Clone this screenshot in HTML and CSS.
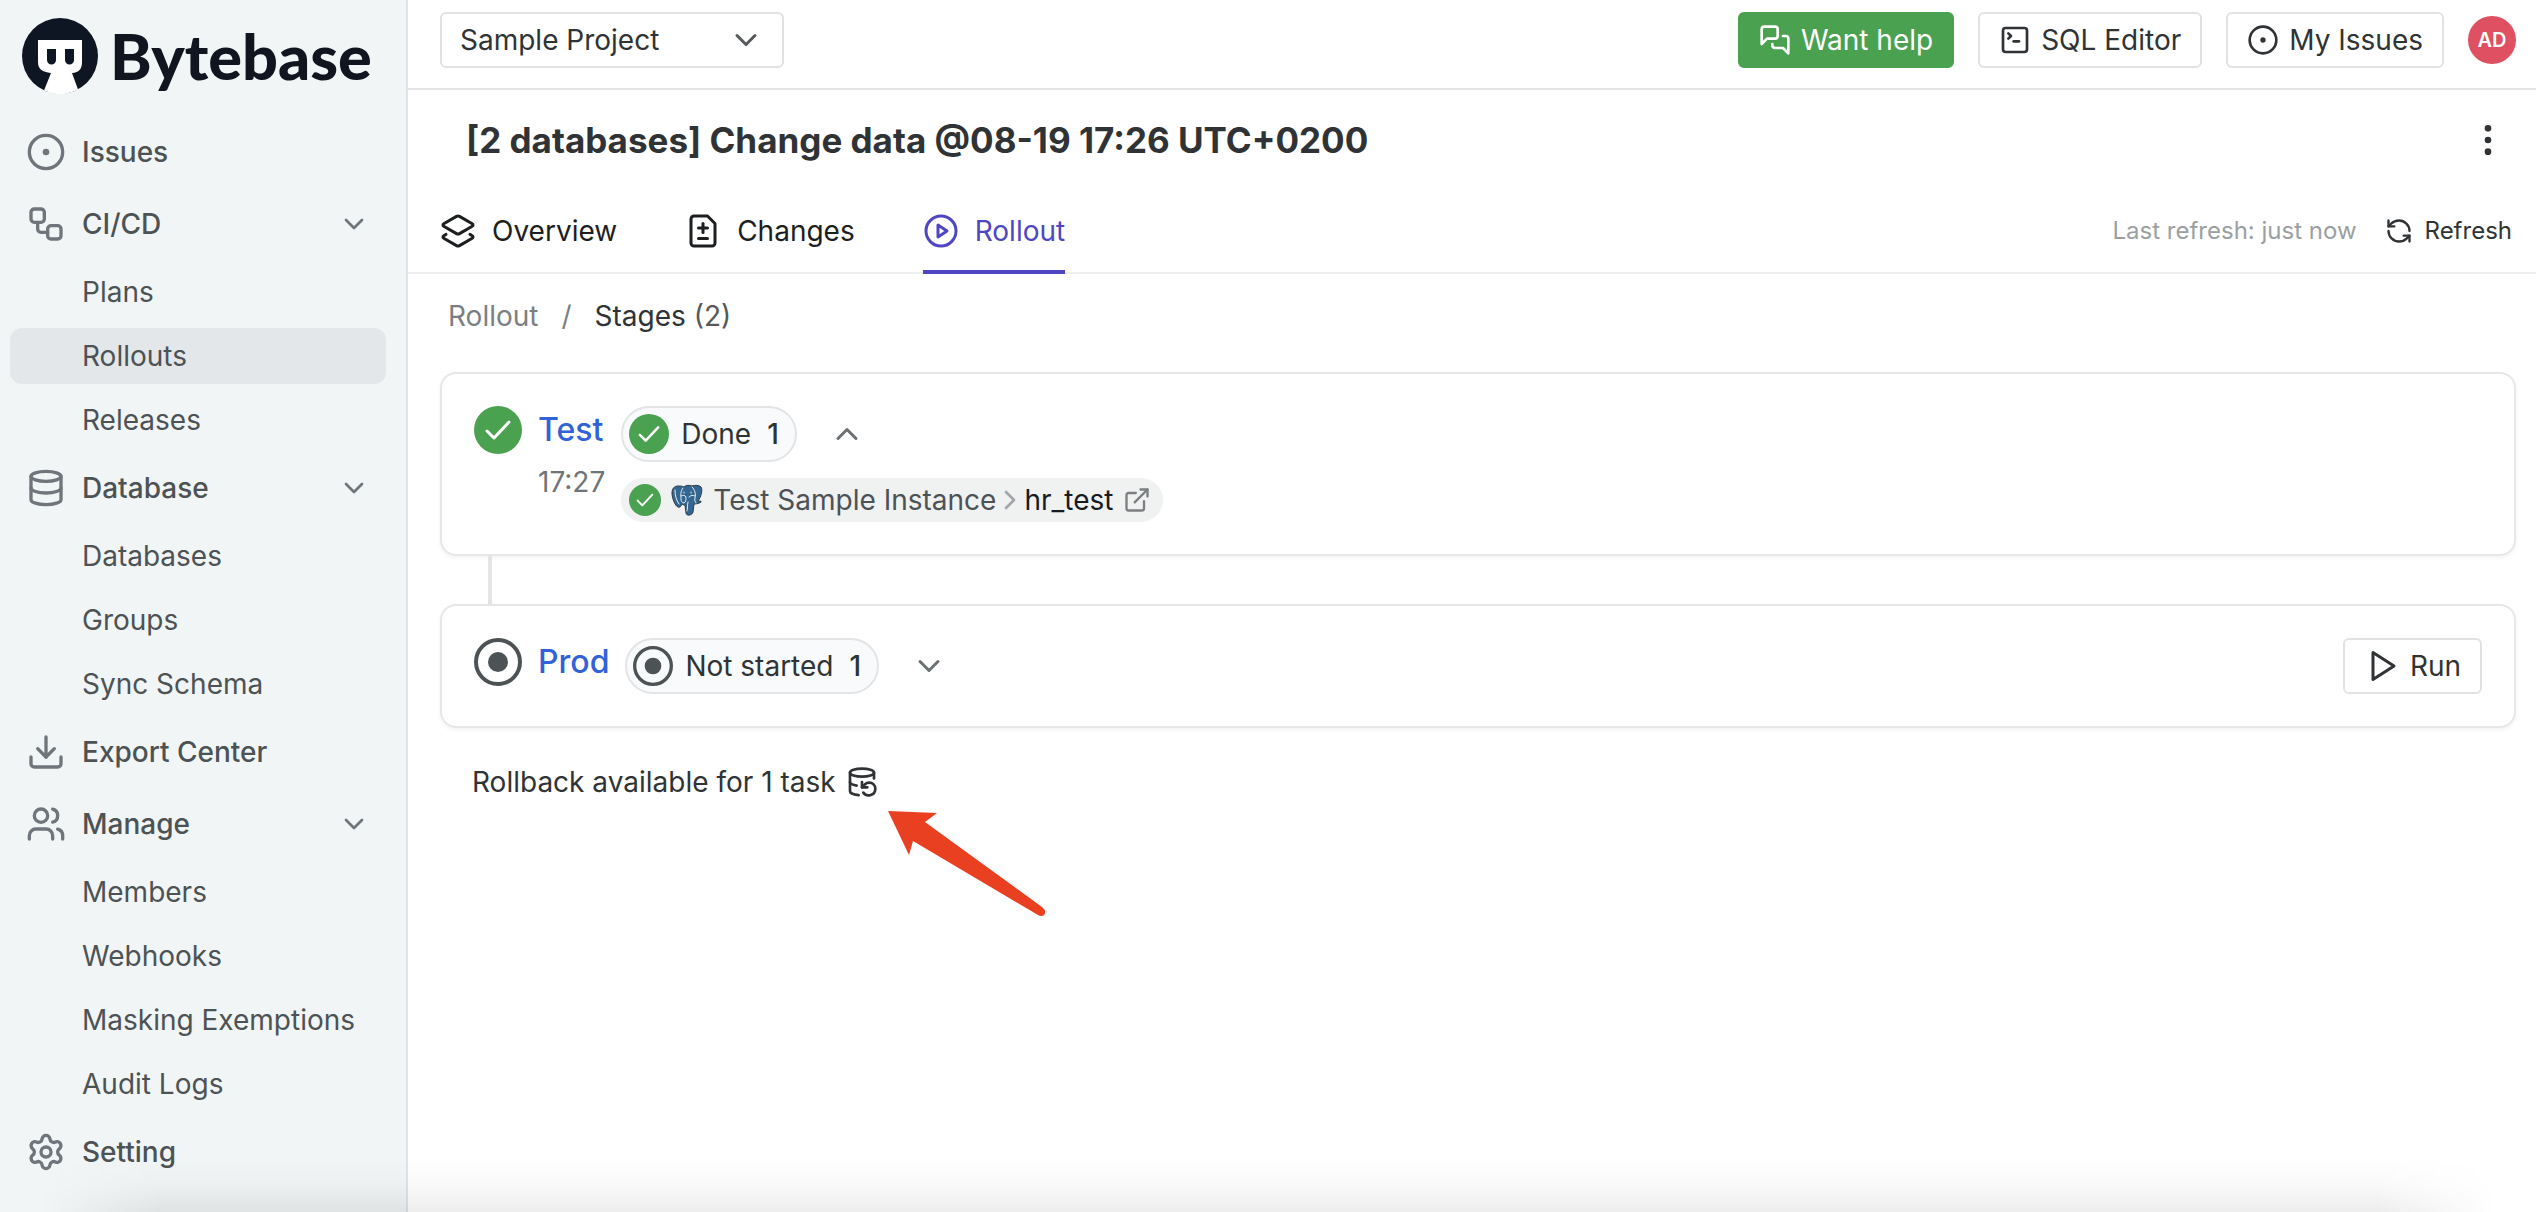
FILE: index.html
```html
<!DOCTYPE html>
<html lang="en">

<head>
    <meta charset="UTF-8" />
    <meta name="viewport" content="width=device-width, initial-scale=1.0" />
    <title>Rollout - Bytebase</title>
    <link rel="stylesheet" href="styles.css">
</head>

<body>
    <!-- Shared icon shapes -->
    <svg class="sprite" aria-hidden="true">
        <symbol id="i-circle-dot" viewBox="0 0 24 24"><circle cx="12" cy="12" r="10"/><circle cx="12" cy="12" r="1"/></symbol>
        <symbol id="i-workflow" viewBox="0 0 24 24"><rect x="3" y="3" width="8" height="8" rx="2"/><path d="M7 11v4a2 2 0 0 0 2 2h4"/><rect x="13" y="13" width="8" height="8" rx="2"/></symbol>
        <symbol id="i-database" viewBox="0 0 24 24"><ellipse cx="12" cy="5" rx="9" ry="3"/><path d="M3 5v14a9 3 0 0 0 18 0V5"/><path d="M3 12a9 3 0 0 0 18 0"/></symbol>
        <symbol id="i-download" viewBox="0 0 24 24"><path d="M12 15V3"/><path d="M21 15v4a2 2 0 0 1-2 2H5a2 2 0 0 1-2-2v-4"/><path d="m7 10 5 5 5-5"/></symbol>
        <symbol id="i-users" viewBox="0 0 24 24"><path d="M16 21v-2a4 4 0 0 0-4-4H6a4 4 0 0 0-4 4v2"/><path d="M16 3.128a4 4 0 0 1 0 7.744"/><path d="M22 21v-2a4 4 0 0 0-3-3.87"/><circle cx="9" cy="7" r="4"/></symbol>
        <symbol id="i-settings" viewBox="0 0 24 24"><path d="M9.671 4.136a2.34 2.34 0 0 1 4.659 0 2.34 2.34 0 0 0 3.319 1.915 2.34 2.34 0 0 1 2.33 4.033 2.34 2.34 0 0 0 0 3.831 2.34 2.34 0 0 1-2.33 4.033 2.34 2.34 0 0 0-3.319 1.915 2.34 2.34 0 0 1-4.659 0 2.34 2.34 0 0 0-3.32-1.915 2.34 2.34 0 0 1-2.33-4.033 2.34 2.34 0 0 0 0-3.831A2.34 2.34 0 0 1 6.35 6.051a2.34 2.34 0 0 0 3.319-1.915"/><circle cx="12" cy="12" r="3"/></symbol>
        <symbol id="i-chevron-down" viewBox="0 0 24 24"><path d="m6 9 6 6 6-6"/></symbol>
        <symbol id="i-chevron-up" viewBox="0 0 24 24"><path d="m18 15-6-6-6 6"/></symbol>
        <symbol id="i-chevron-right" viewBox="0 0 24 24"><path d="m9 18 6-6-6-6"/></symbol>
        <symbol id="i-messages" viewBox="0 0 24 24"><path d="M14 9a2 2 0 0 1-2 2H6l-4 4V4a2 2 0 0 1 2-2h8a2 2 0 0 1 2 2z"/><path d="M18 9h2a2 2 0 0 1 2 2v11l-4-4h-6a2 2 0 0 1-2-2v-1"/></symbol>
        <symbol id="i-terminal" viewBox="0 0 24 24"><path d="m7 11 2-2-2-2"/><path d="M11 13h4"/><rect x="3" y="3" width="18" height="18" rx="2"/></symbol>
        <symbol id="i-more" viewBox="0 0 24 24"><circle cx="12" cy="12" r="1"/><circle cx="12" cy="5" r="1"/><circle cx="12" cy="19" r="1"/></symbol>
        <symbol id="i-layers" viewBox="0 0 24 24"><path d="M13 13.74a2 2 0 0 1-2 0L2.5 8.87a1 1 0 0 1 0-1.74L11 2.26a2 2 0 0 1 2 0l8.5 4.87a1 1 0 0 1 0 1.74z"/><path d="m20 14.285 1.5.845a1 1 0 0 1 0 1.74L13 21.74a2 2 0 0 1-2 0l-8.5-4.87a1 1 0 0 1 0-1.74l1.5-.845"/></symbol>
        <symbol id="i-file-diff" viewBox="0 0 24 24"><path d="M15 2H6a2 2 0 0 0-2 2v16a2 2 0 0 0 2 2h12a2 2 0 0 0 2-2V7Z"/><path d="M9 10h6"/><path d="M12 13V7"/><path d="M9 17h6"/></symbol>
        <symbol id="i-play-circle" viewBox="0 0 24 24"><circle cx="12" cy="12" r="10"/><path d="m10 8 6 4-6 4z"/></symbol>
        <symbol id="i-refresh" viewBox="0 0 24 24"><path d="M21 12a9 9 0 0 0-9-9 9.75 9.75 0 0 0-6.74 2.74L3 8"/><path d="M3 3v5h5"/><path d="M3 12a9 9 0 0 0 9 9 9.75 9.75 0 0 0 6.74-2.74L21 16"/><path d="M16 16h5v5"/></symbol>
        <symbol id="i-external" viewBox="0 0 24 24"><path d="M15 3h6v6"/><path d="M10 14 21 3"/><path d="M18 13v6a2 2 0 0 1-2 2H5a2 2 0 0 1-2-2V8a2 2 0 0 1 2-2h6"/></symbol>
        <symbol id="i-play" viewBox="0 0 24 24"><path d="m6 3 14 9-14 9z"/></symbol>
        <symbol id="i-backup" viewBox="0 0 24 24"><ellipse cx="12" cy="5" rx="9" ry="3"/><path d="M3 12a9 3 0 0 0 5 2.69"/><path d="M21 9.3V5"/><path d="M3 5v14a9 3 0 0 0 6.47 2.88"/><path d="M12 12v4h4"/><path d="M13 20a5 5 0 0 0 9-3 4.5 4.5 0 0 0-4.5-4.5c-1.33 0-2.54.54-3.41 1.41L12 16"/></symbol>
        <symbol id="i-done" viewBox="0 0 24 24"><circle cx="12" cy="12" r="12" fill="#4aa150" stroke="none"/><path d="m6.500 12.500 3.500 3.500 7.500-8" stroke="#fff" stroke-width="1.500"/></symbol>
        <symbol id="i-pending" viewBox="0 0 24 24"><circle cx="12" cy="12" r="11"/><circle cx="12" cy="12" r="5" fill="currentColor" stroke="none"/></symbol>
    </svg>

    <div class="layout">
        <aside class="sidebar">
            <a class="logo" href="#">
                <svg viewBox="0 0 76 76">
                    <circle cx="38" cy="38" r="38" fill="#0e1624"/>
                    <path d="M16 22h44v22c0 7-3 10.500-10 11l6 16.500A38 38 0 0 1 22 72.500L29 55c-9-1-13-4-13-11z" fill="#fff"/>
                    <path d="M25 31h9v11a4.500 4.500 0 0 1-9 0zM43 31h9v11a4.500 4.500 0 0 1-9 0z" fill="#0e1624"/>
                </svg>
                <span>Bytebase</span>
            </a>

            <nav class="nav">
                <a class="nav-item" href="#"><svg class="icon"><use href="#i-circle-dot"/></svg>Issues</a>

                <button class="nav-item" type="button"><svg class="icon"><use href="#i-workflow"/></svg>CI/CD<svg class="icon caret"><use href="#i-chevron-down"/></svg></button>
                <div class="nav-children">
                    <a href="#">Plans</a>
                    <a href="#" class="active">Rollouts</a>
                    <a href="#">Releases</a>
                </div>

                <button class="nav-item" type="button"><svg class="icon"><use href="#i-database"/></svg>Database<svg class="icon caret"><use href="#i-chevron-down"/></svg></button>
                <div class="nav-children">
                    <a href="#">Databases</a>
                    <a href="#">Groups</a>
                    <a href="#">Sync Schema</a>
                </div>

                <a class="nav-item" href="#"><svg class="icon"><use href="#i-download"/></svg>Export Center</a>

                <button class="nav-item" type="button"><svg class="icon"><use href="#i-users"/></svg>Manage<svg class="icon caret"><use href="#i-chevron-down"/></svg></button>
                <div class="nav-children">
                    <a href="#">Members</a>
                    <a href="#">Webhooks</a>
                    <a href="#">Masking Exemptions</a>
                    <a href="#">Audit Logs</a>
                </div>

                <a class="nav-item" href="#"><svg class="icon"><use href="#i-settings"/></svg>Setting</a>
            </nav>
        </aside>

        <main class="main">
            <header class="topbar">
                <div class="project-select">
                    <select aria-label="Project">
                        <option>Sample Project</option>
                    </select>
                    <svg class="icon"><use href="#i-chevron-down"/></svg>
                </div>
                <div class="topbar-actions">
                    <button class="btn btn-green" type="button"><svg class="icon"><use href="#i-messages"/></svg>Want help</button>
                    <button class="btn" type="button"><svg class="icon"><use href="#i-terminal"/></svg>SQL Editor</button>
                    <button class="btn" type="button"><svg class="icon"><use href="#i-circle-dot"/></svg>My Issues</button>
                    <button class="avatar" type="button">AD</button>
                </div>
            </header>

            <div class="title-row">
                <h1>[2 databases] Change data @08-19 17:26 UTC+0200</h1>
                <button class="icon-btn" type="button" aria-label="More"><svg class="icon"><use href="#i-more"/></svg></button>
            </div>

            <div class="tab-bar">
                <nav class="tabs">
                    <a class="tab" href="#"><svg class="icon"><use href="#i-layers"/></svg>Overview</a>
                    <a class="tab" href="#"><svg class="icon"><use href="#i-file-diff"/></svg>Changes</a>
                    <a class="tab active" href="#"><svg class="icon"><use href="#i-play-circle"/></svg>Rollout</a>
                </nav>
                <div class="refresh">
                    <span>Last refresh: just now</span>
                    <button type="button"><svg class="icon"><use href="#i-refresh"/></svg>Refresh</button>
                </div>
            </div>

            <div class="breadcrumb">
                <a href="#">Rollout</a>
                <span class="slash">/</span>
                <span class="current">Stages <span class="count">(2)</span></span>
            </div>

            <div class="stages">
                <section class="card">
                    <svg class="icon stage-icon"><use href="#i-done"/></svg>
                    <div class="stage-name">
                        <a href="#">Test</a>
                        <span class="time">17:27</span>
                    </div>
                    <div class="stage-body">
                        <div class="stage-line">
                            <button class="badge" type="button"><svg class="icon"><use href="#i-done"/></svg>Done <span>1</span></button>
                            <button class="icon-btn toggle" type="button" aria-label="Collapse"><svg class="icon"><use href="#i-chevron-up"/></svg></button>
                        </div>
                        <div class="task">
                            <svg class="icon"><use href="#i-done"/></svg>
                            <svg class="pg" viewBox="0 0 32 32">
                                <path d="M7 2C3 2 1 5 1 9c0 5 3 13 6 14 2 1 3-1 4-3 1 1 2 1 3 1l1 8c0 3 6 3 7-1l1-8c3 0 6-1 7-2 1-1-2-1-3-1 3-4 5-11 3-14-2-2-6-2-9-1-3-1-6-1-8 1-2-1-4-1-6-1z" fill="#336791" stroke="#2c3844"/>
                                <path d="M12 4c-3 3-2 8-2 11 0 2 1 4 3 4 2-1 2-4 2-6-1-2-3-2-5-1M21 3c3 3 4 7 3 11-1 3 1 4 1 5M18 13c2-2 4-2 6-1M17 18c-1 3 0 7-1 9M20 8v1M13 8v1M4 6c0 5 1 10 4 14" fill="none" stroke="#e8eef2" stroke-linecap="round"/>
                            </svg>
                            <span class="instance">Test Sample Instance</span>
                            <svg class="icon sep"><use href="#i-chevron-right"/></svg>
                            <span class="db">hr_test</span>
                            <a class="open-link" href="#" aria-label="Open task"><svg class="icon"><use href="#i-external"/></svg></a>
                        </div>
                    </div>
                </section>

                <div class="connector"></div>

                <section class="card">
                    <svg class="icon stage-icon"><use href="#i-pending"/></svg>
                    <div class="stage-name">
                        <a href="#">Prod</a>
                    </div>
                    <div class="stage-body">
                        <div class="stage-line">
                            <button class="badge" type="button"><svg class="icon"><use href="#i-pending"/></svg>Not started <span>1</span></button>
                            <button class="icon-btn toggle" type="button" aria-label="Expand"><svg class="icon"><use href="#i-chevron-down"/></svg></button>
                        </div>
                    </div>
                    <button class="btn btn-run" type="button"><svg class="icon"><use href="#i-play"/></svg>Run</button>
                </section>
            </div>

            <div class="rollback">
                <span>Rollback available for 1 task</span>
                <button class="rollback-btn" type="button" aria-label="Rollback">
                    <svg class="icon"><use href="#i-backup"/></svg>
                </button>
                <svg class="arrow" viewBox="0 0 160 110" aria-hidden="true">
                    <path d="M0 0 49 2 37 11 154 96q5 4 2 8-2 2-6 0L25 30 21 44z" fill="#e94022"/>
                </svg>
            </div>
        </main>
    </div>
    <div class="bottom-shade"></div>
</body>

</html>
```

FILE: styles.css
```css
* {
    box-sizing: border-box;
}

body {
    margin: 0;
    font-family: Inter, "Liberation Sans", sans-serif;
    font-size: 28px;
    line-height: 40px;
    color: #303335;
    background: #fff;
}

a {
    color: inherit;
    text-decoration: none;
}

button,
select {
    font: inherit;
    color: inherit;
    background: none;
    border: none;
    padding: 0;
    cursor: pointer;
}

.sprite {
    display: none;
}

.icon {
    width: 32px;
    height: 32px;
    flex-shrink: 0;
    fill: none;
    stroke: currentColor;
    stroke-width: 2;
    stroke-linecap: round;
    stroke-linejoin: round;
}

.layout {
    display: flex;
    min-height: 100vh;
}

/* Sidebar */
.sidebar {
    width: 408px;
    flex-shrink: 0;
    background: #f1f5f6;
    border-right: 2px solid #e0e4e6;
}

.logo {
    display: flex;
    align-items: center;
    gap: 12px;
    height: 112px;
    padding-left: 22px;
    font-family: Lato, sans-serif;
    font-size: 63px;
    font-weight: 900;
    color: #10151f;
}

.logo svg {
    width: 76px;
    height: 76px;
}

.nav {
    display: flex;
    flex-direction: column;
    padding: 4px 20px 0 10px;
    color: #4d5255;
}

.nav-item {
    display: flex;
    align-items: center;
    gap: 16px;
    height: 56px;
    margin: 8px 0;
    padding: 0 16px;
    font-weight: 500;
    text-align: left;
}

.nav-item .icon {
    width: 40px;
    height: 40px;
    color: #6f757b;
}

.nav-item .caret {
    width: 32px;
    height: 32px;
    margin-left: auto;
}

.nav-children {
    display: flex;
    flex-direction: column;
    gap: 8px;
    margin: 4px 0;
}

.nav-children a {
    padding: 8px 0 8px 72px;
    border-radius: 12px;
}

.nav-children .active {
    background: #e3e7e9;
}

/* Top bar */
.main {
    flex: 1;
    min-width: 0;
}

.topbar {
    display: flex;
    align-items: center;
    justify-content: space-between;
    height: 90px;
    padding: 0 20px 8px 32px;
    border-bottom: 2px solid #e2e4e6;
}

.project-select {
    position: relative;
    width: 344px;
}

.project-select select {
    appearance: none;
    width: 100%;
    height: 56px;
    padding: 0 18px;
    border: 2px solid #e0e2e4;
    border-radius: 6px;
}

.project-select .icon {
    position: absolute;
    right: 20px;
    top: 10px;
    width: 36px;
    height: 36px;
    color: #55595c;
    pointer-events: none;
}

.topbar-actions {
    display: flex;
    align-items: center;
    gap: 24px;
}

.btn {
    display: flex;
    align-items: center;
    gap: 10px;
    height: 56px;
    padding: 0 19px;
    border: 2px solid #e0e2e4;
    border-radius: 6px;
}

.btn-green {
    background: #4aa150;
    border-color: #4aa150;
    color: #fff;
}

.avatar {
    width: 48px;
    height: 48px;
    border-radius: 50%;
    background: #df5062;
    color: #fff;
    font-size: 20px;
    font-weight: 600;
}

/* Title and tabs */
.title-row {
    display: flex;
    align-items: center;
    justify-content: space-between;
    padding: 28px 28px 0 58px;
}

h1 {
    margin: 0;
    font-size: 35px;
    line-height: 44px;
    font-weight: 700;
}

.icon-btn {
    display: flex;
}

.title-row .icon {
    width: 40px;
    height: 40px;
}

.tab-bar {
    display: flex;
    justify-content: space-between;
    margin-top: 28px;
    padding: 0 24px 0 32px;
    border-bottom: 2px solid #eeeff0;
}

.tabs {
    display: flex;
    gap: 68px;
    margin-bottom: -2px;
}

.tab {
    display: flex;
    align-items: center;
    gap: 16px;
    height: 84px;
    padding-top: 2px;
    border-bottom: 4px solid transparent;
    color: #1c1e20;
}

.tab .icon {
    width: 36px;
    height: 36px;
}

.tab.active {
    color: #4f46c4;
    border-color: #4f46c4;
}

.refresh {
    display: flex;
    align-items: center;
    gap: 28px;
    font-size: 24px;
    color: #9b9fa2;
}

.refresh button {
    display: flex;
    align-items: center;
    gap: 12px;
    color: #303335;
}

.refresh .icon {
    width: 28px;
    height: 28px;
}

.breadcrumb {
    display: flex;
    gap: 23px;
    padding: 22px 40px 0;
    color: #7b7f82;
}

.breadcrumb .current {
    color: #303335;
}

.breadcrumb .count {
    color: #55595c;
}

/* Stages */
.stages {
    padding: 36px 20px 0 32px;
}

.card {
    display: flex;
    align-items: flex-start;
    gap: 16px;
    padding: 32px;
    border: 2px solid #e5e7e8;
    border-radius: 16px;
    box-shadow: 0 2px 4px rgba(0, 0, 0, 0.05);
}

.connector {
    width: 4px;
    height: 48px;
    margin-left: 48px;
    background: #e2e4e6;
}

.stage-icon {
    width: 48px;
    height: 48px;
    color: #4d5255;
}

.stage-name {
    display: flex;
    flex-direction: column;
    gap: 8px;
}

.stage-name a {
    font-size: 32px;
    line-height: 48px;
    font-weight: 500;
    color: #3162d9;
}

.stage-name .time {
    color: #6f7477;
}

.stage-body {
    display: flex;
    flex-direction: column;
    align-items: flex-start;
    gap: 16px;
    flex: 1;
}

.stage-line {
    display: flex;
    align-items: center;
    gap: 32px;
}

.badge {
    display: flex;
    align-items: center;
    gap: 12px;
    height: 56px;
    padding: 0 16px 0 6px;
    border: 2px solid #e2e4e6;
    border-radius: 28px;
    background: #f9fafb;
}

.badge .icon {
    width: 40px;
    height: 40px;
    color: #4d5255;
}

.badge span {
    margin-left: 4px;
    font-weight: 500;
}

.toggle .icon {
    width: 36px;
    height: 36px;
    color: #6b7073;
}

.task {
    display: flex;
    align-items: center;
    gap: 10px;
    height: 44px;
    padding: 0 12px 0 8px;
    border-radius: 22px;
    background: #f0f1f1;
}

.pg {
    width: 32px;
    height: 32px;
}

.task .instance {
    color: #4d5255;
}

.task .sep {
    margin: 0 -12px;
    color: #a2a6a9;
}

.task .db {
    color: #181b1f;
}

.open-link {
    display: flex;
    color: #7b7f82;
}

.open-link .icon {
    width: 28px;
    height: 28px;
}

.btn-run .icon {
    width: 36px;
    height: 36px;
}

.rollback {
    position: relative;
    display: flex;
    align-items: center;
    gap: 10px;
    width: fit-content;
    margin-top: 34px;
    padding-left: 64px;
}

.rollback-btn {
    display: flex;
}

/* Pointer to the rollback button */
.arrow {
    position: absolute;
    top: 49px;
    left: 100%;
    width: 160px;
    height: 110px;
    margin-left: 10px;
}

.bottom-shade {
    position: fixed;
    left: 40px;
    right: 40px;
    bottom: 0;
    height: 56px;
    background: linear-gradient(rgba(0, 0, 0, 0), rgba(0, 0, 0, 0.02) 50%, rgba(0, 0, 0, 0.07));
    mask-image: linear-gradient(90deg, transparent, #000 120px, #000 calc(100% - 120px), transparent);
    pointer-events: none;
}
```
